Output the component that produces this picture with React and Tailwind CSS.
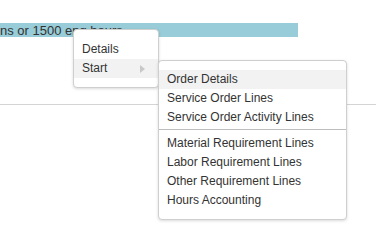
const subItems = [
  ["Order Details", "Service Order Lines", "Service Order Activity Lines"],
  ["Material Requirement Lines", "Labor Requirement Lines", "Other Requirement Lines", "Hours Accounting"],
];

const Row = ({ label, active, arrow }) => (
  <div
    className={`h-[19px] flex items-center justify-between pl-[8px] pr-[13px] leading-[19px] ${
      active ? "bg-[#f2f2f2]" : ""
    }`}
  >
    <span>{label}</span>
    {arrow && (
      <svg width="5" height="8" viewBox="0 0 5 8">
        <path d="M0 0 L5 4 L0 8 Z" fill="#c8c8c8" />
      </svg>
    )}
  </div>
);

const App = () => {
  return (
    <div
      className="relative w-[376px] h-[243px] bg-white text-[12px] text-[#333]"
      style={{ fontFamily: '"Liberation Sans", Arial, sans-serif' }}
    >
      <div className="pt-[23px]">
        <div className="w-[298px] h-[14px] bg-[#97ccd8] text-[13px] leading-[14px] pt-[1px] whitespace-nowrap overflow-hidden">
          ns or 1500 eng hours
        </div>
      </div>
      <div className="mt-[67px] border-t border-[#d4d4d4]" />

      {/* context menu */}
      <div className="absolute left-[73px] top-[29px] w-[86px] h-[59px] bg-white border border-[#cfcfcf] rounded-[4px] shadow-[0_1px_3px_rgba(0,0,0,0.15)] pt-[10px]">
        <Row label="Details" />
        <Row label="Start" active arrow />
      </div>

      {/* submenu */}
      <div className="absolute left-[158px] top-[60px] w-[189px] h-[160px] bg-white border border-[#cfcfcf] rounded-[4px] shadow-[0_1px_3px_rgba(0,0,0,0.15)] pt-[9px]">
        {subItems[0].map((s, i) => (
          <Row key={s} label={s} active={i === 0} />
        ))}
        <div className="my-[2px] border-t border-[#bdbdbd] h-[3px]" />
        {subItems[1].map((s) => (
          <Row key={s} label={s} />
        ))}
      </div>
    </div>
  );
};

export default App;
